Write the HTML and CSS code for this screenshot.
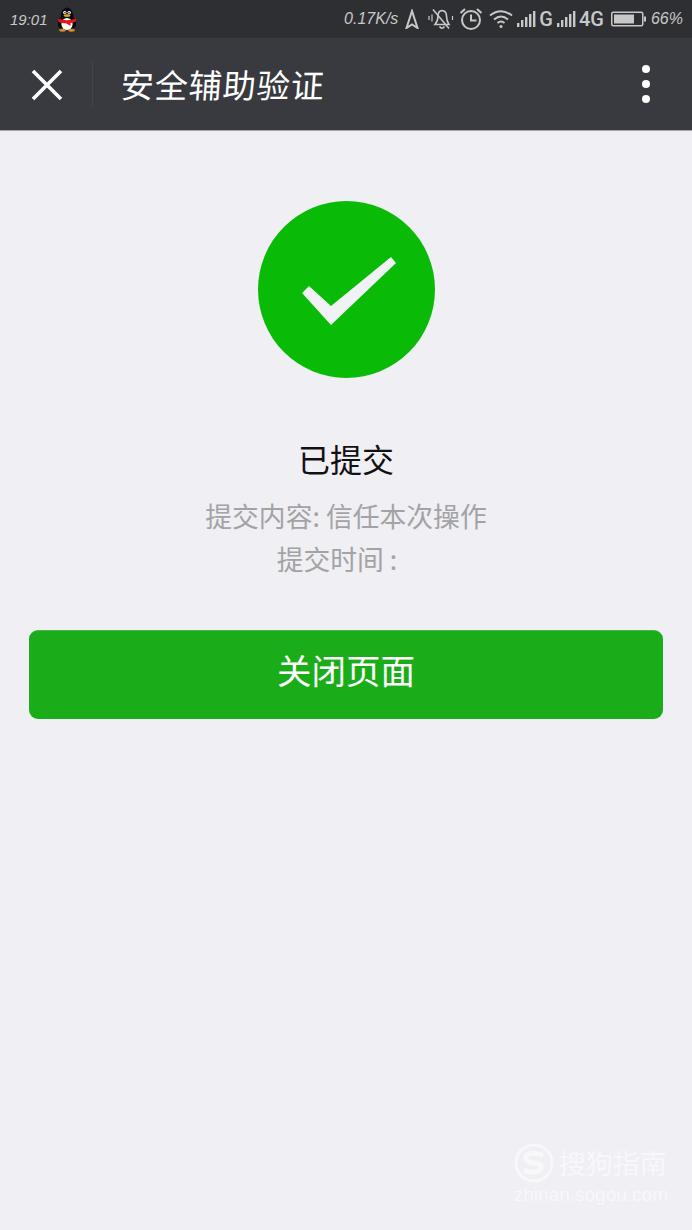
FILE: index.html
```html
<!DOCTYPE html>
<html lang="zh-CN">
<head>
    <meta charset="UTF-8">
    <meta name="viewport" content="width=device-width, initial-scale=1.0">
    <title>安全辅助验证</title>
    <link rel="stylesheet" href="styles.css">
</head>
<body>
    <div class="status-bar">
        <div class="status-left">
            <span class="status-time">19:01</span>
            <svg class="qq-icon" width="20" height="26" viewBox="0 0 20 26">
                <ellipse cx="10" cy="12" rx="6.5" ry="10.5" fill="#0b0b0b"/>
                <ellipse cx="3.5" cy="17" rx="2.6" ry="5" fill="#0b0b0b"/>
                <ellipse cx="16.5" cy="17" rx="2.6" ry="5" fill="#0b0b0b"/>
                <ellipse cx="10" cy="18" rx="5.6" ry="6" fill="#fff"/>
                <circle cx="7.8" cy="6.6" r="1.7" fill="#fff"/>
                <circle cx="12.2" cy="6.6" r="1.7" fill="#fff"/>
                <circle cx="8" cy="6.8" r=".8" fill="#111"/>
                <circle cx="12" cy="6.8" r=".8" fill="#111"/>
                <ellipse cx="10" cy="9.6" rx="3.4" ry="1.3" fill="#e0a91c"/>
                <path d="M1 12.5 Q10 16 19 12.5 L19 15.5 Q15 17 13.5 17 L13.5 20 L9.5 17.4 Q4 17.4 1.5 15.8 Z" fill="#e0161a"/>
                <ellipse cx="5.5" cy="24.3" rx="3.4" ry="1.4" fill="#d9921c"/>
                <ellipse cx="14.5" cy="24.3" rx="3.4" ry="1.4" fill="#d9921c"/>
            </svg>
        </div>
        <div class="status-right">
            <span class="status-hand speed">0.17K/s</span>
            <svg width="14" height="20" viewBox="0 0 14 20" fill="none" stroke="#c8c8c9" stroke-width="2">
                <path d="M1.5 19 7 2 12.5 19 7 15.5Z"/>
            </svg>
            <svg class="gap-bell" width="26" height="24" viewBox="0 0 26 24" fill="none" stroke="#c8c8c9" stroke-width="1.6">
                <path d="M7 17.5 Q10 14 10 9 Q10 4 14 3.5 Q18.5 4 18.5 9 Q18.5 14 21 17.5Z"/>
                <path d="M11.5 19.5 Q14 23 16.5 19.5"/>
                <path d="M5 2.5 21 21.5"/>
                <path d="M1 9v4M4 7.5v7M24.500 9v4" stroke-width="1.2"/>
            </svg>
            <svg class="gap-alarm" width="24" height="24" viewBox="0 0 24 24" fill="none" stroke="#c8c8c9" stroke-width="2">
                <circle cx="12" cy="13" r="9"/>
                <path d="M12 7.500v6h5.500"/>
                <path d="M1.500 6 6 2M22.500 6 18 2"/>
            </svg>
            <svg class="gap-wifi" width="24" height="20" viewBox="0 0 24 20" fill="none" stroke="#c8c8c9" stroke-width="2">
                <path d="M1 6.500Q12 -2 23 6.500"/>
                <path d="M5 10.500Q12 4.500 19 10.500"/>
                <path d="M8.500 14Q12 11 15.500 14"/>
                <circle cx="12" cy="17.500" r="1.500" fill="#c8c8c9" stroke="none"/>
            </svg>
            <svg class="signal" width="19" height="18" viewBox="0 0 19 18" fill="#c8c8c9">
                <rect x="0" y="13" width="2.400" height="4"/>
                <rect x="4" y="10" width="2.400" height="7"/>
                <rect x="8" y="7" width="2.400" height="10"/>
                <rect x="12" y="4" width="2.400" height="13"/>
                <rect x="16" y="1" width="2.400" height="16"/>
            </svg>
            <span class="net">G</span>
            <svg class="signal" width="19" height="18" viewBox="0 0 19 18" fill="#c8c8c9">
                <rect x="0" y="13" width="2.400" height="4"/>
                <rect x="4" y="10" width="2.400" height="7"/>
                <rect x="8" y="7" width="2.400" height="10"/>
                <rect x="12" y="4" width="2.400" height="13"/>
                <rect x="16" y="1" width="2.400" height="16"/>
            </svg>
            <span class="net">4G</span>
            <svg class="battery" width="35" height="16" viewBox="0 0 35 16" fill="#c8c8c9">
                <rect x=".75" y="1.250" width="31" height="13.500" rx="1.500" fill="none" stroke="#c8c8c9" stroke-width="1.500"/>
                <rect x="3" y="3.500" width="20" height="9"/>
                <rect x="33" y="5.500" width="2" height="5"/>
            </svg>
            <span class="status-hand">66%</span>
        </div>
    </div>

    <header class="nav-bar">
        <button class="nav-close" aria-label="关闭">
            <svg width="32" height="32" viewBox="0 0 32 32" stroke="#fff" stroke-width="3.600">
                <path d="M2 2 30 30M30 2 2 30"/>
            </svg>
        </button>
        <div class="nav-title">安全辅助验证</div>
        <div class="nav-more"><span></span><span></span><span></span></div>
    </header>

    <main class="result">
        <div class="result-icon">
            <svg width="94" height="68" viewBox="0 0 94 68" fill="#f1f2f5">
                <path d="M0 36 7 29 29 49 89 0 94 6 29 68Z"/>
            </svg>
        </div>
        <h1 class="result-title">已提交</h1>
        <p class="result-desc">提交内容: 信任本次操作<br>提交时间 :&nbsp;&nbsp;&nbsp;</p>
        <button class="btn-close">关闭页面</button>
    </main>

    <div class="watermark">
        <div class="watermark-row">
            <svg width="40" height="40" viewBox="0 0 40 40" fill="none" stroke="#f8f8fb">
                <circle cx="20" cy="20" r="18" stroke-width="3"/>
                <path d="M29 13Q20 8 13 12Q9 16 15 19L25 21Q30 25 24 28Q17 31 10 27" stroke-width="5"/>
            </svg>
            <span class="watermark-name">搜狗指南</span>
        </div>
        <div class="watermark-url">zhinan.sogou.com</div>
    </div>
</body>
</html>
```

FILE: styles.css
```css
* {
    box-sizing: border-box;
}

html, body {
    height: 100%;
}

body {
    margin: 0;
    position: relative;
    overflow: hidden;
    font-family: "Noto Sans CJK SC", "Liberation Sans", sans-serif;
    background-color: #efeff4;
}

.status-bar {
    display: flex;
    justify-content: space-between;
    align-items: center;
    height: 38px;
    padding: 0 9px 0 10px;
    background-color: #2e2f33;
    color: #c8c8c9;
}

.status-left,
.status-right {
    display: flex;
    align-items: center;
}

.status-time {
    font-family: "Liberation Sans", sans-serif;
    font-size: 15px;
    font-style: italic;
    width: 47px;
}

.status-hand {
    font-family: "Liberation Sans", sans-serif;
    font-size: 16px;
    font-style: italic;
}

.speed {
    margin-right: 7px;
}

.gap-bell {
    margin-left: 9px;
}

.gap-alarm {
    margin-left: 5px;
}

.gap-wifi {
    margin-left: 6px;
}

.signal {
    margin-left: 4px;
}

.net {
    font-family: "Roboto", sans-serif;
    font-size: 20px;
    font-weight: 500;
    margin-left: 3px;
}

.battery {
    margin: 0 5px 0 7px;
}

.nav-bar {
    display: flex;
    align-items: center;
    height: 93px;
    padding-right: 42px;
    background-color: #393a3f;
    border-bottom: 1px solid #a6a6a8;
}

.nav-close {
    display: flex;
    align-items: center;
    justify-content: center;
    width: 93px;
    height: 48px;
    padding: 2px 0 0 1px;
    background: none;
    border: none;
    border-right: 1px solid #434449;
}

.nav-title {
    flex: 1;
    margin-left: 28px;
    color: #fff;
    font-size: 33px;
    letter-spacing: 1px;
    line-height: 1;
    transform: skewX(-4deg);
}

.nav-more {
    display: flex;
    flex-direction: column;
    gap: 7px;
}

.nav-more span {
    width: 8px;
    height: 8px;
    border-radius: 50%;
    background-color: #fff;
}

.result {
    display: flex;
    flex-direction: column;
    align-items: center;
    padding: 70px 29px 0;
}

.result-icon {
    display: flex;
    align-items: center;
    justify-content: center;
    width: 177px;
    height: 177px;
    border-radius: 50%;
    background-color: #09bb07;
}

.result-icon svg {
    margin: 3px 0 0 6px;
}

.result-title {
    margin: 57px 0 0;
    height: 46px;
    color: #111;
    font-size: 32px;
    font-weight: 400;
    line-height: 46px;
}

.result-desc {
    margin: 13px 0 0;
    color: #a3a3a5;
    font-size: 26.800px;
    line-height: 43px;
    text-align: center;
}

.btn-close {
    width: 100%;
    height: 89px;
    margin-top: 50px;
    padding-bottom: 14px;
    color: #fff;
    font-family: inherit;
    font-size: 34.500px;
    background-color: #1aad19;
    border: none;
    border-top: 1px solid #4cb34b;
    border-radius: 9px;
}

/* sits over the page like the real site's stamp */
.watermark {
    position: absolute;
    right: 24px;
    bottom: 24px;
    color: #f8f8fb;
}

.watermark-row {
    display: flex;
    align-items: center;
    gap: 5px;
}

.watermark-name {
    font-size: 27px;
    line-height: 40px;
}

.watermark-url {
    margin-top: 1px;
    font-family: "Liberation Sans", sans-serif;
    font-size: 19px;
    line-height: 22px;
    text-align: right;
}
```
